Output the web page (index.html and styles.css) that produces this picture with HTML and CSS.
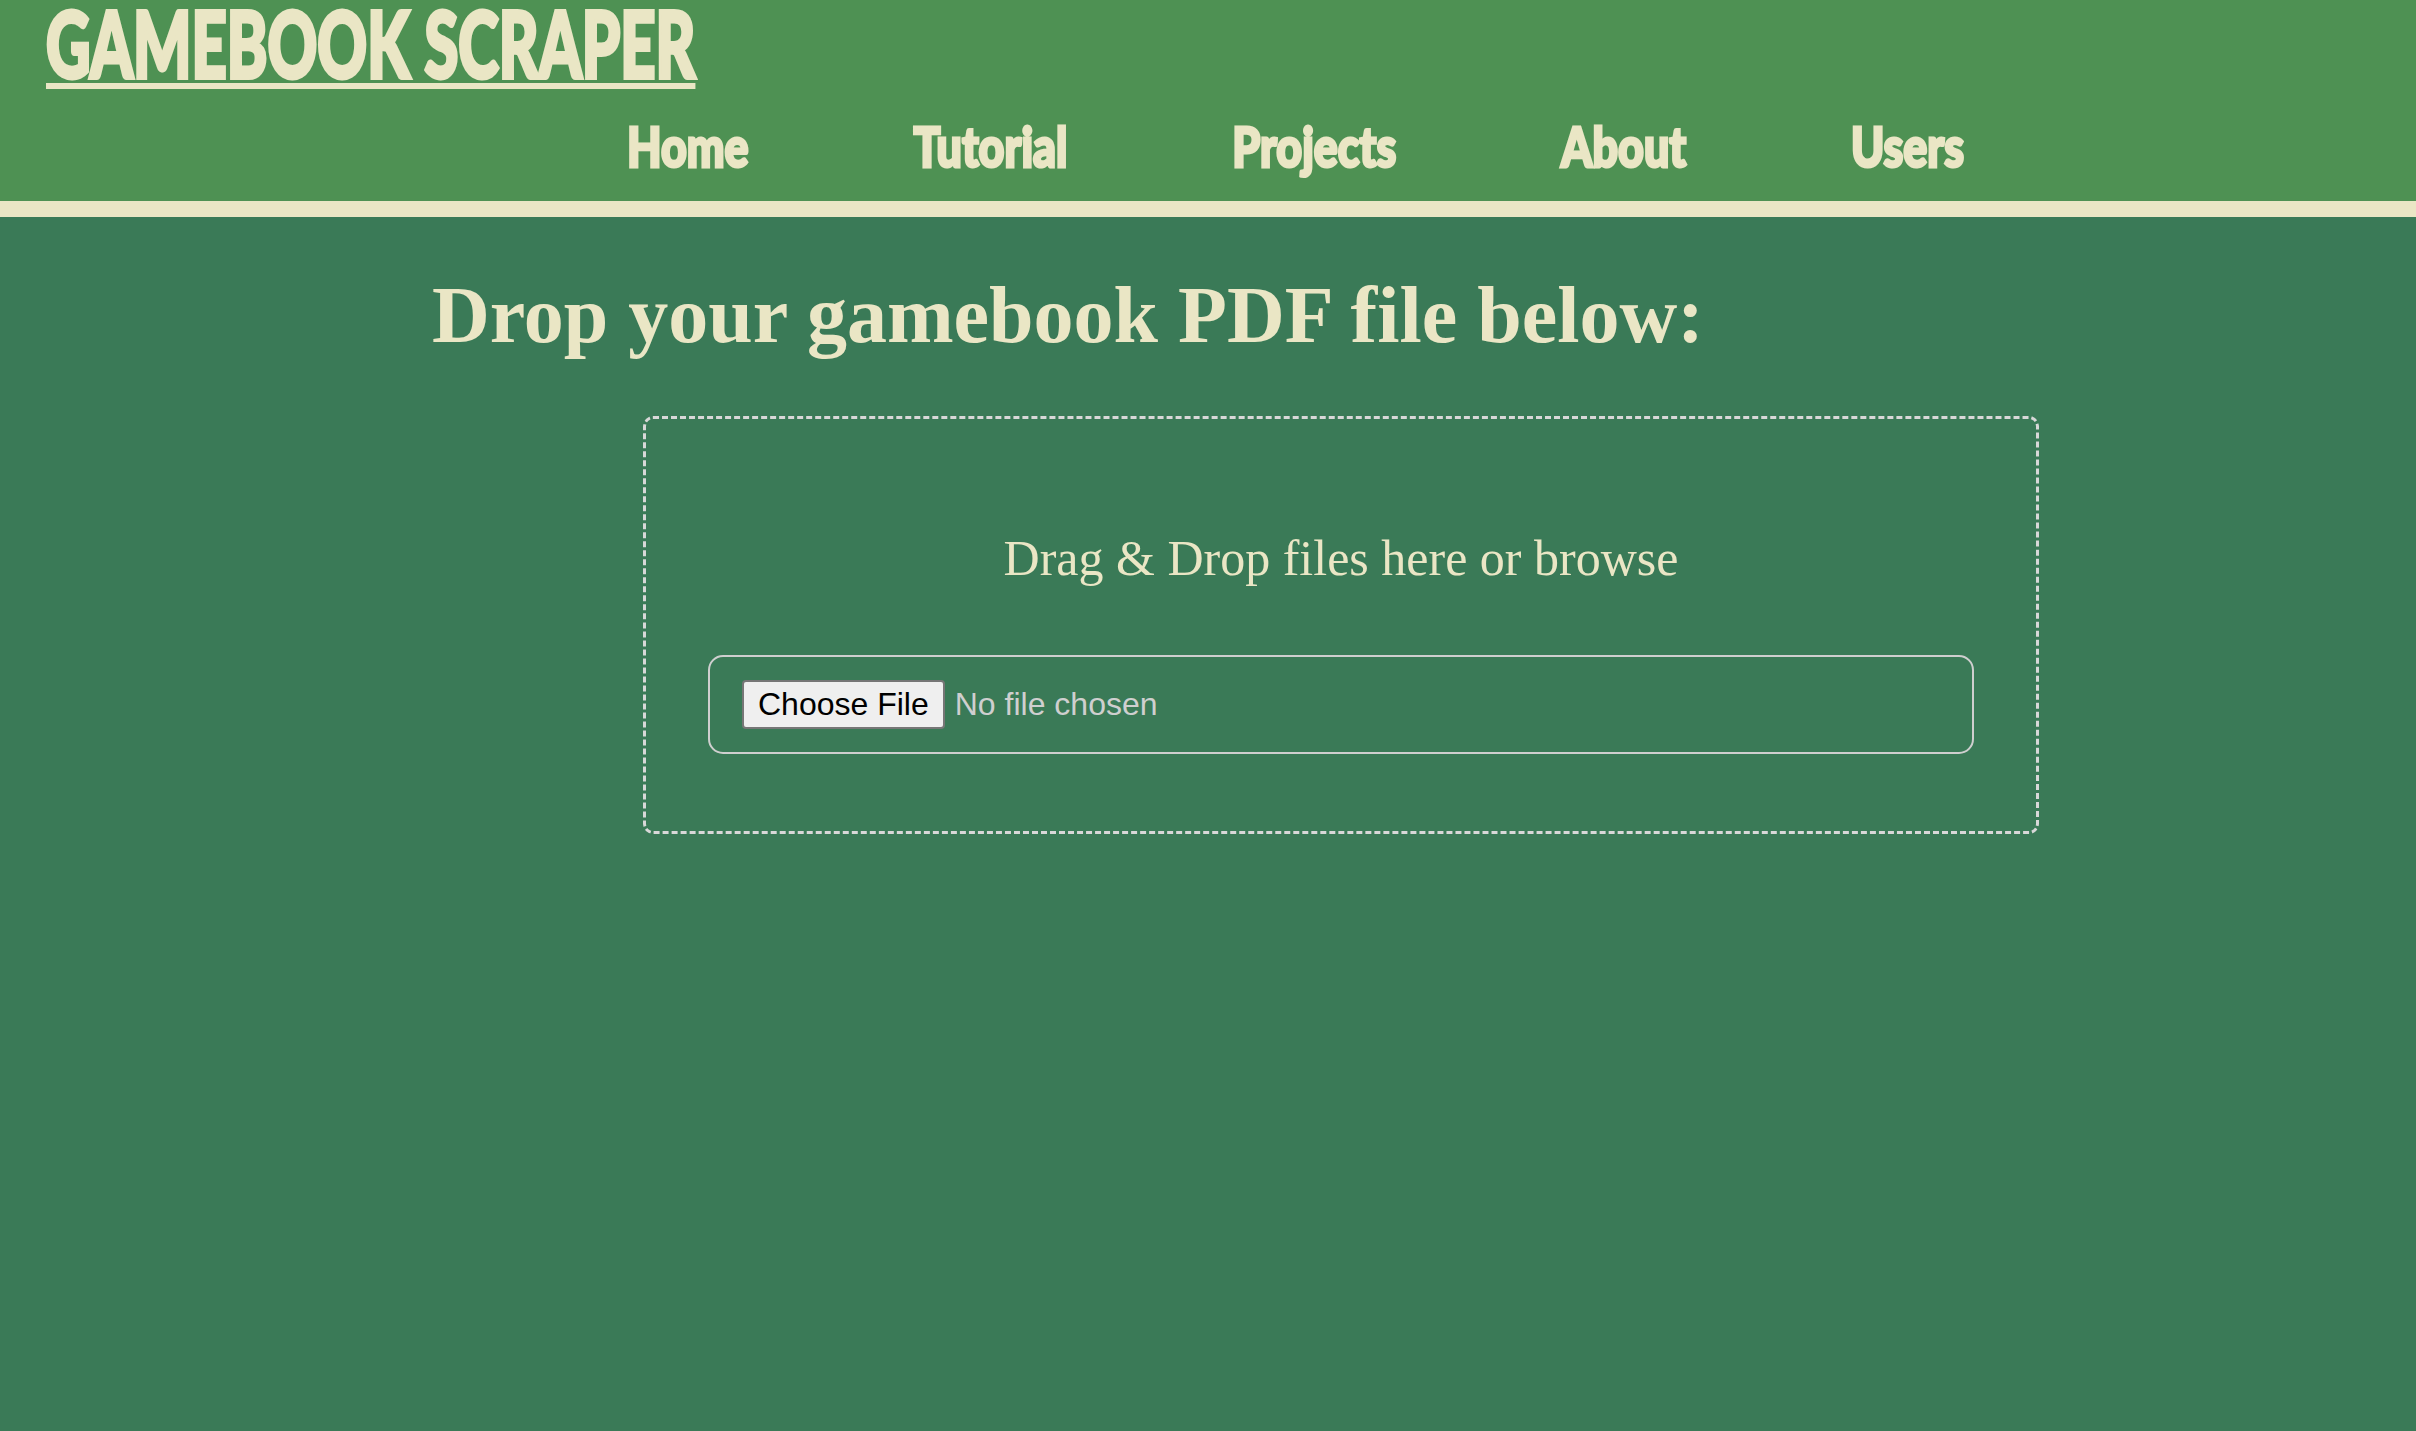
FILE: index.html
```html
<!DOCTYPE html>
<html lang="en">
<head>
<meta charset="utf-8">
<title>Gamebook Scraper</title>
<link rel="stylesheet" href="styles.css">
</head>
<body>
<header class="site-header">
  <a class="brand" href="#"><span class="brand-text">GAMEBOOK SCRAPER</span></a>
  <nav class="main-nav">
    <ul class="nav-list">
      <li><a class="nav-link" href="#">Home</a></li>
      <li><a class="nav-link" href="#">Tutorial</a></li>
      <li><a class="nav-link" href="#">Projects</a></li>
      <li><a class="nav-link" href="#">About</a></li>
      <li><a class="nav-link" href="#">Users</a></li>
    </ul>
  </nav>
</header>
<main class="content">
  <h1 class="page-title">Drop your gamebook PDF file below:</h1>
  <div class="drop-zone">
    <p class="drop-hint">Drag &amp; Drop files here or browse</p>
    <input class="file-input" type="file" accept="application/pdf">
  </div>
</main>
</body>
</html>
```
FILE: styles.css
```css
html, body {
  margin: 0;
  padding: 0;
}
body {
  background: #3a7a57;
  min-height: 100vh;
  font-family: "Liberation Serif", "Times New Roman", serif;
}
.site-header {
  background: #4e9153;
  border-bottom: 16px solid #eae6c5;
  padding: 0 0 22px 0;
}
.brand {
  display: block;
  padding-left: 46px;
  color: #eae6c5;
  text-decoration: none;
  font-family: Lato, "Liberation Sans", sans-serif;
  font-weight: 900;
  font-size: 91px;
  line-height: 86px;
  height: 86px;
}
.brand-text {
  display: inline-block;
  transform: scaleX(0.675);
  transform-origin: left center;
  text-decoration: underline;
  text-decoration-thickness: 6px;
  text-underline-offset: 5px;
  -webkit-text-stroke: 4px #eae6c5;
  white-space: nowrap;
}
.main-nav {
  margin-top: 26px;
  padding-left: 627px;
}
.nav-list {
  display: flex;
  gap: 206px;
  list-style: none;
  margin: 0;
  padding: 0;
  transform: scaleX(0.8);
  transform-origin: left center;
  font-family: Lato, "Liberation Sans", sans-serif;
  font-weight: 900;
  font-size: 56px;
  line-height: 67px;
}
.nav-link {
  color: #eae6c5;
  text-decoration: none;
  white-space: nowrap;
  -webkit-text-stroke: 3px #eae6c5;
}
.content {
  padding-left: 432px;
}
.page-title {
  margin: 52px 0 0 0;
  font-family: "Liberation Serif", "Times New Roman", serif;
  font-weight: 700;
  font-size: 80px;
  line-height: 92px;
  color: #eae6c5;
}
.drop-zone {
  box-sizing: border-box;
  width: 1396px;
  margin: 55px 0 0 211px;
  border: 3px dashed #d8d8d8;
  border-radius: 10px;
  padding: 77px 62px;
}
.drop-hint {
  margin: 35px 0 69px 0;
  text-align: center;
  font-family: "Liberation Serif", "Times New Roman", serif;
  font-size: 50px;
  line-height: 55px;
  color: #eae6c5;
}
.file-input {
  display: block;
  box-sizing: border-box;
  width: 100%;
  margin: 0;
  border: 2px solid #cfcfcf;
  border-radius: 15px;
  padding: 23px 32px;
  font-family: "Liberation Sans", Arial, sans-serif;
  font-size: 32px;
  color: #cfcfcf;
  background: transparent;
}
.file-input::file-selector-button {
  font: inherit;
  color: #000;
  background: #efefef;
  border: 2px solid #767676;
  border-radius: 4px;
  padding: 4px 14px;
  line-height: 37px;
  margin-right: 10px;
}
```
